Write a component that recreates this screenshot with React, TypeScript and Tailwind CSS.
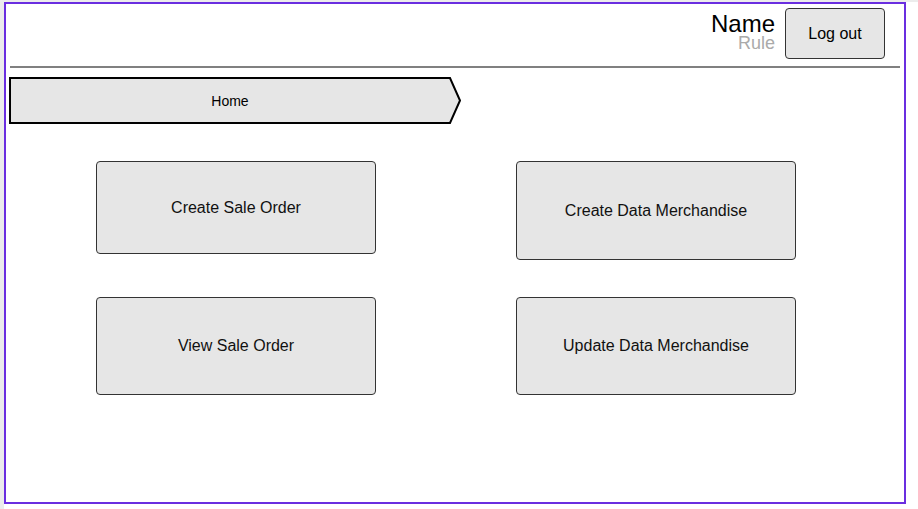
import React from 'react';

interface TileProps {
    label: string;
    heightClass: string;
}

const Tile: React.FC<TileProps> = ({ label, heightClass }) => (
    <button
        className={`w-[280px] ${heightClass} flex items-center justify-center rounded-[4px] border border-[#333333] bg-[#e6e6e6] text-[16px] text-[#111111]`}
    >
        {label}
    </button>
);

const App: React.FC = () => {
    return (
        <div
            className="w-[918px] h-[509px] bg-white border-l-[4px] border-t-[2px] border-[#ececec] overflow-hidden"
            style={{ fontFamily: '"Liberation Sans", Arial, sans-serif' }}
        >
            <div className="w-[902px] h-[502px] border-2 border-[#6a2ee0] bg-white">
                {/* header */}
                <header className="h-[62px] flex justify-end items-start pt-[4px] pr-[19px]">
                    <div className="mt-[5px] mr-[10px] flex flex-col items-end">
                        <span className="text-[24px] leading-[22px] text-black">Name</span>
                        <span className="text-[18px] leading-[17px] text-[#aaaaaa]">Rule</span>
                    </div>
                    <button className="w-[100px] h-[51px] pt-[1px] rounded-[4px] border border-[#333333] bg-[#e6e6e6] text-[16px] text-black">
                        Log out
                    </button>
                </header>
                <div className="ml-[4px] w-[890px] h-[2px] bg-[#808080]"></div>

                {/* breadcrumb */}
                <div className="relative mt-[9px] ml-[3px] w-[452px] h-[47px]">
                    <svg className="absolute inset-0" width="452" height="47" viewBox="0 0 452 47">
                        <polygon
                            points="1,1 441,1 451,23.5 441,46 1,46"
                            fill="#e6e6e6"
                            stroke="#000000"
                            strokeWidth="2"
                            strokeLinejoin="miter"
                        />
                    </svg>
                    <div className="relative w-[442px] h-full pt-[2px] flex items-center justify-center text-[14px] text-black">
                        Home
                    </div>
                </div>

                {/* menu tiles */}
                <div className="mt-[37px] pl-[90px] grid grid-cols-[280px_280px] gap-x-[140px] gap-y-[37px] items-start">
                    <Tile label="Create Sale Order" heightClass="h-[93px]" />
                    <Tile label="Create Data Merchandise" heightClass="h-[99px]" />
                    <Tile label="View Sale Order" heightClass="h-[98px]" />
                    <Tile label="Update Data Merchandise" heightClass="h-[98px]" />
                </div>
            </div>
        </div>
    );
};

export default App;
